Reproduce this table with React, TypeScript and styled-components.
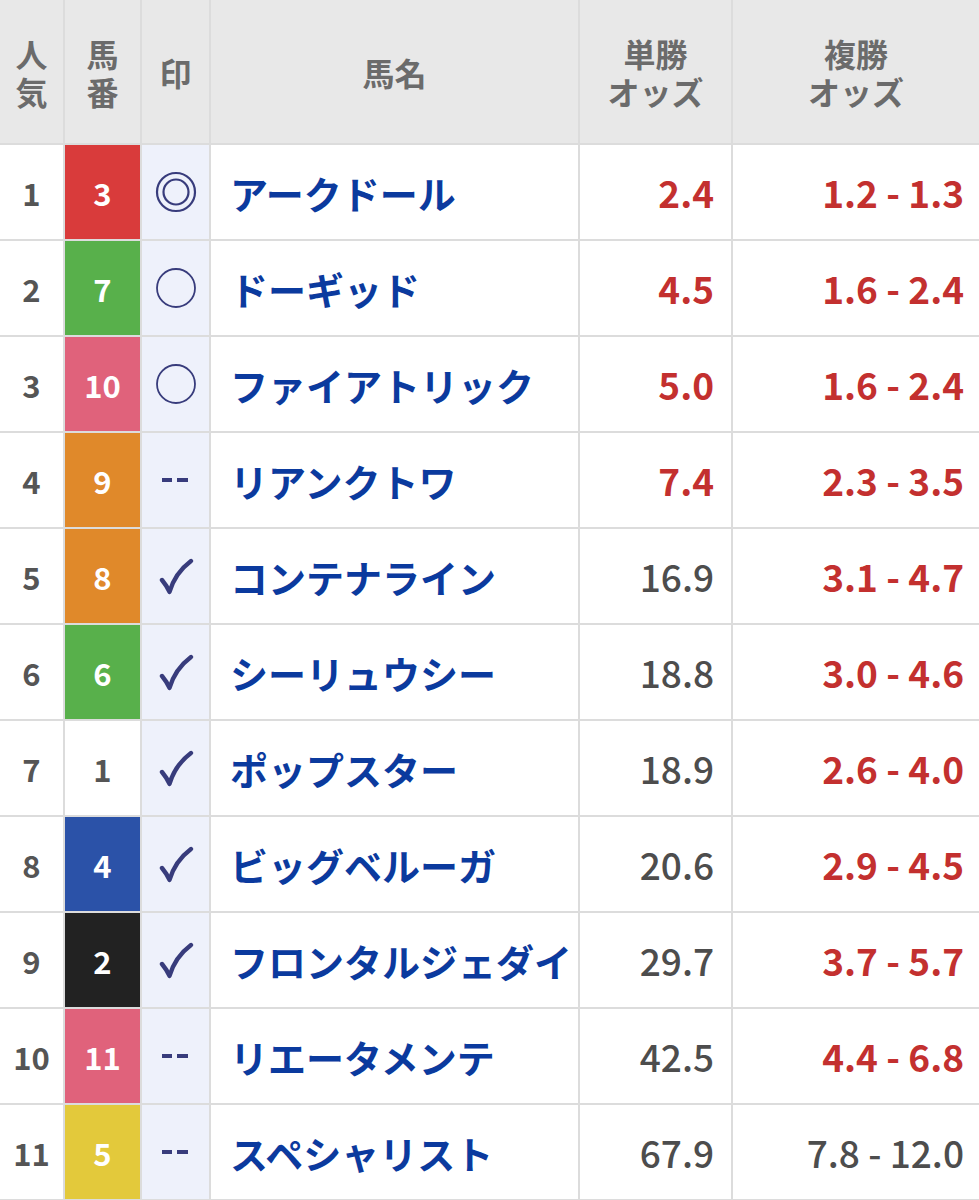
import React from "react";
import styled, { createGlobalStyle } from "styled-components";

const GlobalStyle = createGlobalStyle`
  html, body { margin: 0; padding: 0; background: #ffffff; }
  body { font-family: "Noto Sans CJK JP", "Noto Sans", sans-serif; }
`;

const COLS = "63px 75px 67px 367px 151px 246px";

const Table = styled.div`
  width: 979px;
  display: grid;
  row-gap: 2px;
  background: #dcdcdc;
  padding-bottom: 1px;
`;

const Row = styled.div<{ $header?: boolean }>`
  display: grid;
  grid-template-columns: ${COLS};
  column-gap: 2px;
  height: ${(p) => (p.$header ? "143px" : "94px")};
`;

const HeadCell = styled.div`
  background: #e8e8e8;
  color: #6b6b6b;
  font-weight: 700;
  font-size: 32px;
  display: flex;
  flex-direction: column;
  align-items: center;
  justify-content: center;
  text-align: center;
`;

const HeadLine = styled.span`
  display: block;
  line-height: 38px;
  height: 38px;
`;

const Cell = styled.div<{ $align?: "left" | "center" | "right"; $bg?: string }>`
  background: ${(p) => p.$bg || "#ffffff"};
  display: flex;
  align-items: center;
  justify-content: ${(p) =>
    p.$align === "left" ? "flex-start" : p.$align === "right" ? "flex-end" : "center"};
`;

const Pop = styled.span`
  color: #555555;
  font-size: 31px;
  font-weight: 700;
`;

const NumCell = styled(Cell)<{ $fg: string }>`
  color: ${(p) => p.$fg};
  font-size: 31px;
  font-weight: 700;
`;

const MarkCell = styled(Cell)`
  background: #eef1fb;
  color: #3b3f7c;
`;

const NameCell = styled(Cell)`
  padding-left: 19px;
  color: #0b3a9e;
  font-size: 38px;
  font-weight: 700;
  white-space: nowrap;
`;

const OddsCell = styled(Cell)<{ $hot: boolean; $pad: number }>`
  padding-right: ${(p) => p.$pad}px;
  color: ${(p) => (p.$hot ? "#c3302f" : "#4d4d4d")};
  font-size: 37px;
  font-weight: ${(p) => (p.$hot ? 700 : 500)};
  white-space: nowrap;
`;

type Mark = "double" | "circle" | "dash" | "check";

const MarkIcon: React.FC<{ mark: Mark }> = ({ mark }) => {
  const c = "#383c7c";
  if (mark === "double")
    return (
      <svg width="44" height="44" viewBox="0 0 44 44">
        <circle cx="22" cy="22" r="19" fill="none" stroke={c} strokeWidth="2.2" />
        <circle cx="22" cy="22" r="12.5" fill="none" stroke={c} strokeWidth="2.2" />
      </svg>
    );
  if (mark === "circle")
    return (
      <svg width="44" height="44" viewBox="0 0 44 44">
        <circle cx="22" cy="22" r="19" fill="none" stroke={c} strokeWidth="1.8" />
      </svg>
    );
  if (mark === "dash")
    return (
      <svg width="32" height="14" viewBox="0 0 32 14">
        <rect x="2" y="5" width="10" height="4" fill={c} />
        <rect x="17" y="5" width="11" height="4" fill={c} />
      </svg>
    );
  return (
    <svg width="36" height="40" viewBox="0 0 36 40">
      <path d="M4 24 Q9 30 11.5 36 Q17 17 33 5" fill="none" stroke={c} strokeWidth="4.4" strokeLinecap="round" strokeLinejoin="round" />
    </svg>
  );
};

type Horse = {
  pop: number;
  num: number;
  bg: string;
  fg: string;
  mark: Mark;
  name: string;
  win: string;
  winHot: boolean;
  place: string;
  placeHot: boolean;
};

const rows: Horse[] = [
  { pop: 1, num: 3, bg: "#d93b3b", fg: "#ffffff", mark: "double", name: "アークドール", win: "2.4", winHot: true, place: "1.2 - 1.3", placeHot: true },
  { pop: 2, num: 7, bg: "#58b04b", fg: "#ffffff", mark: "circle", name: "ドーギッド", win: "4.5", winHot: true, place: "1.6 - 2.4", placeHot: true },
  { pop: 3, num: 10, bg: "#e0627b", fg: "#ffffff", mark: "circle", name: "ファイアトリック", win: "5.0", winHot: true, place: "1.6 - 2.4", placeHot: true },
  { pop: 4, num: 9, bg: "#e0892a", fg: "#ffffff", mark: "dash", name: "リアンクトワ", win: "7.4", winHot: true, place: "2.3 - 3.5", placeHot: true },
  { pop: 5, num: 8, bg: "#e0892a", fg: "#ffffff", mark: "check", name: "コンテナライン", win: "16.9", winHot: false, place: "3.1 - 4.7", placeHot: true },
  { pop: 6, num: 6, bg: "#58b04b", fg: "#ffffff", mark: "check", name: "シーリュウシー", win: "18.8", winHot: false, place: "3.0 - 4.6", placeHot: true },
  { pop: 7, num: 1, bg: "#ffffff", fg: "#555555", mark: "check", name: "ポップスター", win: "18.9", winHot: false, place: "2.6 - 4.0", placeHot: true },
  { pop: 8, num: 4, bg: "#2b52a8", fg: "#ffffff", mark: "check", name: "ビッグベルーガ", win: "20.6", winHot: false, place: "2.9 - 4.5", placeHot: true },
  { pop: 9, num: 2, bg: "#222222", fg: "#ffffff", mark: "check", name: "フロンタルジェダイ", win: "29.7", winHot: false, place: "3.7 - 5.7", placeHot: true },
  { pop: 10, num: 11, bg: "#e0627b", fg: "#ffffff", mark: "dash", name: "リエータメンテ", win: "42.5", winHot: false, place: "4.4 - 6.8", placeHot: true },
  { pop: 11, num: 5, bg: "#e3c93b", fg: "#ffffff", mark: "dash", name: "スペシャリスト", win: "67.9", winHot: false, place: "7.8 - 12.0", placeHot: false },
];

const Head: React.FC<{ lines: string[] }> = ({ lines }) => (
  <HeadCell>
    {lines.map((l) => (
      <HeadLine key={l}>{l}</HeadLine>
    ))}
  </HeadCell>
);

export default function App() {
  return (
    <>
      <GlobalStyle />
      <Table>
        <Row $header>
          <Head lines={["人", "気"]} />
          <Head lines={["馬", "番"]} />
          <Head lines={["印"]} />
          <Head lines={["馬名"]} />
          <Head lines={["単勝", "オッズ"]} />
          <Head lines={["複勝", "オッズ"]} />
        </Row>
        {rows.map((r) => (
          <Row key={r.pop}>
            <Cell>
              <Pop>{r.pop}</Pop>
            </Cell>
            <NumCell $bg={r.bg} $fg={r.fg}>
              {r.num}
            </NumCell>
            <MarkCell>
              <MarkIcon mark={r.mark} />
            </MarkCell>
            <NameCell $align="left">{r.name}</NameCell>
            <OddsCell $align="right" $hot={r.winHot} $pad={17}>
              {r.win}
            </OddsCell>
            <OddsCell $align="right" $hot={r.placeHot} $pad={15}>
              {r.place}
            </OddsCell>
          </Row>
        ))}
      </Table>
    </>
  );
}
